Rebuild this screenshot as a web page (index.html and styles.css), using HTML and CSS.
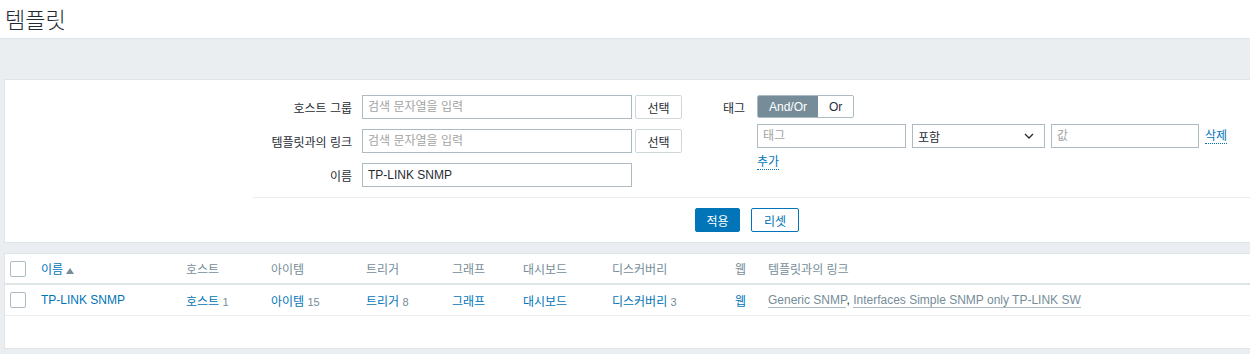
FILE: index.html
```html
<!DOCTYPE html>
<html lang="ko">
<head>
    <meta charset="UTF-8">
    <title>템플릿</title>
    <link rel="stylesheet" href="styles.css">
</head>
<body>
    <header class="page-header">
        <h1>템플릿</h1>
    </header>
    <main class="wrapper">
        <div class="filter-box">
            <div class="filter-columns">
                <div class="filter-col">
                    <div class="form-row">
                        <label class="form-label">호스트 그룹</label>
                        <input class="text-input" type="text" placeholder="검색 문자열을 입력">
                        <button class="btn-grey">선택</button>
                    </div>
                    <div class="form-row">
                        <label class="form-label">템플릿과의 링크</label>
                        <input class="text-input" type="text" placeholder="검색 문자열을 입력">
                        <button class="btn-grey">선택</button>
                    </div>
                    <div class="form-row">
                        <label class="form-label">이름</label>
                        <input class="text-input" type="text" value="TP-LINK SNMP">
                    </div>
                </div>
                <div class="filter-col tags">
                    <div class="tag-label">태그</div>
                    <div class="tag-body">
                        <div class="radio-seg">
                            <span class="seg active">And/Or</span>
                            <span class="seg">Or</span>
                        </div>
                        <div class="tag-row">
                            <input class="text-input tag-name" type="text" placeholder="태그">
                            <div class="select-box">포함
                                <svg class="chevron" width="10" height="6" viewBox="0 0 10 6"><path d="M1 1l4 4 4-4" fill="none" stroke="#1f2c33" stroke-width="1.3"/></svg>
                            </div>
                            <input class="text-input tag-value" type="text" placeholder="값">
                            <a class="link-dotted">삭제</a>
                        </div>
                        <a class="link-dotted">추가</a>
                    </div>
                </div>
            </div>
            <div class="filter-buttons">
                <button class="btn-main">적용</button>
                <button class="btn-alt">리셋</button>
            </div>
        </div>

        <div class="list-box">
            <table class="list-table">
                <colgroup>
                    <col style="width:31px">
                    <col style="width:145px">
                    <col style="width:85px">
                    <col style="width:95px">
                    <col style="width:86px">
                    <col style="width:71px">
                    <col style="width:89px">
                    <col style="width:123px">
                    <col style="width:33px">
                    <col>
                </colgroup>
                <thead>
                    <tr>
                        <th class="cell-check"><span class="checkbox"></span></th>
                        <th><a class="link">이름</a><span class="arrow-up"></span></th>
                        <th>호스트</th>
                        <th>아이템</th>
                        <th>트리거</th>
                        <th>그래프</th>
                        <th>대시보드</th>
                        <th>디스커버리</th>
                        <th>웹</th>
                        <th>템플릿과의 링크</th>
                    </tr>
                </thead>
                <tbody>
                    <tr>
                        <td class="cell-check"><span class="checkbox"></span></td>
                        <td><a class="link">TP-LINK SNMP</a></td>
                        <td><a class="link">호스트</a> <sup class="count">1</sup></td>
                        <td><a class="link">아이템</a> <sup class="count">15</sup></td>
                        <td><a class="link">트리거</a> <sup class="count">8</sup></td>
                        <td><a class="link">그래프</a></td>
                        <td><a class="link">대시보드</a></td>
                        <td><a class="link">디스커버리</a> <sup class="count">3</sup></td>
                        <td><a class="link">웹</a></td>
                        <td><a class="link-grey">Generic SNMP</a>, <a class="link-grey">Interfaces Simple SNMP only TP-LINK SW</a></td>
                    </tr>
                </tbody>
            </table>
            <div class="list-empty"></div>
        </div>
    </main>
</body>
</html>
```

FILE: styles.css
```css
html, body {
    margin: 0;
    padding: 0;
    height: 100%;
    overflow: hidden;
}
body {
    background-color: #ebeef0;
    color: #1f2c33;
    font-family: "Liberation Sans", Arial, "Noto Sans CJK KR", sans-serif;
    font-size: 12px;
}
.page-header {
    background-color: #fff;
    height: 38px;
    border-bottom: 1px solid #dfe4e7;
    padding: 0 5px;
}
.page-header h1 {
    margin: 0;
    font-size: 22px;
    font-weight: 300;
    line-height: 36px;
    font-family: "Noto Sans CJK KR", sans-serif;
}
.wrapper {
    padding: 40px 0 0 4px;
}
.filter-box {
    background-color: #fff;
    border: 1px solid #dfe4e7;
    border-right: none;
    padding: 15px 0 10px 0;
    margin-right: -10px;
}
.filter-columns {
    display: flex;
    padding-left: 248px;
}
.filter-col {
    display: flex;
    flex-direction: column;
    gap: 10px;
    width: 450px;
}
.form-row {
    display: flex;
    align-items: center;
    height: 24px;
}
.form-label {
    width: 99px;
    text-align: right;
    margin-right: 10px;
}
.text-input {
    box-sizing: border-box;
    width: 270px;
    height: 24px;
    border: 1px solid #acbbc2;
    padding: 0 5px;
    font-family: inherit;
    font-size: 12px;
    color: #1f2c33;
    margin: 0;
    outline: none;
}
.text-input::placeholder {
    color: #a3a3a3;
}
.btn-grey {
    box-sizing: border-box;
    height: 24px;
    width: 47px;
    margin-left: 3px;
    border: 1px solid #cfd7db;
    border-radius: 2px;
    background-color: #fff;
    color: #1f2c33;
    font-family: inherit;
    font-size: 12px;
    padding: 0;
}
.tags {
    flex-direction: row;
    gap: 0;
    width: auto;
}
.tag-label {
    width: 54px;
    text-align: right;
    padding-right: 12px;
    padding-top: 4px;
    box-sizing: border-box;
}
.tag-body {
    display: flex;
    flex-direction: column;
    align-items: flex-start;
}
.radio-seg {
    display: flex;
    height: 23px;
    border: 1px solid #acbbc2;
    border-radius: 2px;
    box-sizing: border-box;
    overflow: hidden;
}
.seg {
    display: flex;
    align-items: center;
    padding: 0 11px;
    color: #1f2c33;
}
.seg.active {
    background-color: #768d99;
    color: #fff;
}
.tag-row {
    display: flex;
    align-items: center;
    gap: 6px;
    margin-top: 6px;
}
.tag-name {
    width: 149px;
}
.tag-value {
    width: 148px;
}
.select-box {
    box-sizing: border-box;
    width: 133px;
    height: 24px;
    border: 1px solid #acbbc2;
    padding: 0 5px;
    display: flex;
    align-items: center;
    justify-content: space-between;
}
.chevron {
    margin-right: 5px;
}
.link-dotted {
    color: #0275b8;
    border-bottom: 1px dotted #0275b8;
    line-height: 14px;
    cursor: pointer;
}
.tag-body > .link-dotted {
    margin-top: 7px;
}
.filter-buttons {
    margin: 10px 0 0 248px;
    border-top: 1px solid #ebeef0;
    padding-top: 10px;
    display: flex;
    gap: 11px;
    padding-left: 442px;
}
.btn-main, .btn-alt {
    box-sizing: border-box;
    height: 24px;
    border-radius: 2px;
    font-family: inherit;
    font-size: 12px;
    padding: 0;
}
.btn-main {
    width: 45px;
    background-color: #0275b8;
    border: 1px solid #0275b8;
    color: #fff;
}
.btn-alt {
    width: 48px;
    background-color: #fff;
    border: 1px solid #0275b8;
    color: #0275b8;
}
.list-box {
    margin-top: 10px;
    margin-right: -10px;
    background-color: #fff;
    border: 1px solid #dfe4e7;
    border-right: none;
}
.list-table {
    width: 100%;
    border-collapse: collapse;
    table-layout: fixed;
}
.list-table th {
    text-align: left;
    font-weight: normal;
    color: #768d99;
    height: 29px;
    padding: 0 5px;
    border-bottom: 2px solid #dfe4e7;
}
.list-table td {
    height: 30px;
    padding: 0 5px;
    border-bottom: 1px solid #ebeef0;
    white-space: nowrap;
}
.cell-check {
    padding: 0 0 0 5px !important;
}
.checkbox {
    display: block;
    box-sizing: border-box;
    width: 16px;
    height: 16px;
    border: 1px solid #acbbc2;
    border-radius: 2px;
}
.link {
    color: #0275b8;
    cursor: pointer;
}
.arrow-up {
    display: inline-block;
    margin-left: 3px;
    width: 0;
    height: 0;
    border-left: 4px solid transparent;
    border-right: 4px solid transparent;
    border-bottom: 6px solid #768d99;
}
.count {
    color: #768d99;
    font-size: 11px;
    vertical-align: baseline;
}
.link-grey {
    color: #768d99;
    border-bottom: 1px solid #acbbc2;
}
.list-empty {
    height: 32px;
}
```
